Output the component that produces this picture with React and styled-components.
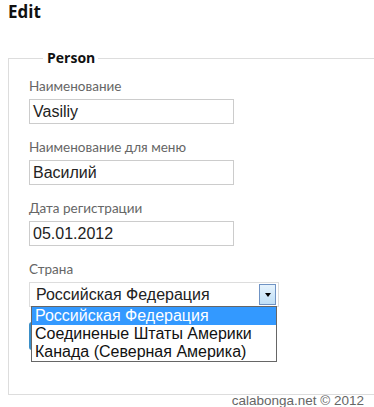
import React from 'react';
import styled, { createGlobalStyle } from 'styled-components';

const GlobalStyle = createGlobalStyle`
    html, body {
        margin: 0;
        padding: 0;
        background: #fff;
        overflow: hidden;
    }
`;

const Page = styled.div`
    width: 390px;
    height: 407px;
    padding-left: 8px;
    box-sizing: border-box;
    font-family: "Open Sans", "Liberation Sans", sans-serif;
`;

const Title = styled.h2`
    margin: 0;
    padding-top: 1px;
    font-size: 17px;
    line-height: 22px;
    font-weight: 700;
    color: #111;
`;

const PersonSet = styled.fieldset`
    position: relative;
    margin: 27px 0 0 0;
    padding: 12px 0 0 20px;
    height: 345px;
    box-sizing: border-box;
    border: 1px solid #ddd;
`;

const Legend = styled.legend`
    margin-left: 14px;
    padding: 0 3px 0 4px;
    font-size: 14px;
    font-weight: 700;
    line-height: 16px;
    color: #111;
`;

const Field = styled.div`
    display: flex;
    flex-direction: column;
    align-items: flex-start;
    margin-bottom: 15px;
    position: relative;
`;

const Label = styled.label`
    font-family: Lato, "Open Sans", sans-serif;
    font-size: 13.5px;
    line-height: 16px;
    color: #666;
    margin-bottom: 5px;
`;

const Input = styled.div`
    width: 205px;
    height: 25px;
    box-sizing: border-box;
    border: 1px solid #ccc;
    padding: 2px 3px 0;
    font-family: "Liberation Sans", Arial, sans-serif;
    font-size: 16px;
    line-height: 20px;
    color: #222;
`;

const Select = styled.div`
    width: 250px;
    height: 25px;
    box-sizing: border-box;
    border: 1px solid #ddd;
    padding: 1px 2px 0 6px;
    display: flex;
    align-items: center;
    justify-content: space-between;
    font-family: "Liberation Sans", Arial, sans-serif;
    font-size: 16px;
    color: #222;
`;

const DropButton = styled.span`
    width: 17px;
    height: 21px;
    box-sizing: border-box;
    border: 1px solid #6f93c4;
    background: linear-gradient(#e6f3fd, #bfdff7);
    display: flex;
    align-items: center;
    justify-content: center;
    margin-top: -1px;
`;

const Arrow = styled.span`
    width: 0;
    height: 0;
    border-left: 3px solid transparent;
    border-right: 3px solid transparent;
    border-top: 4px solid #000;
`;

const OptionList = styled.ul`
    position: absolute;
    left: 2px;
    top: 45px;
    width: 246px;
    margin: 0;
    padding: 0;
    list-style: none;
    box-sizing: border-box;
    border: 1px solid #666;
    background: #fff;
    z-index: 2;
    font-family: "Liberation Sans", Arial, sans-serif;
    font-size: 16px;
    line-height: 18px;
    color: #111;
`;

const Option = styled.li`
    padding-left: 3px;
    background: ${p => (p.selected ? '#3399ff' : 'transparent')};
    color: ${p => (p.selected ? '#fff' : '#111')};
`;

// save button sits behind the open list, only its left edge shows
const SaveButton = styled.button`
    margin-top: 15px;
    width: 80px;
    height: 28px;
    border: none;
    border-radius: 3px;
    background: #3a8fc8;
`;

const Footer = styled.div`
    text-align: right;
    padding-right: 26px;
    margin-top: 0;
    font-family: "Liberation Sans", Arial, sans-serif;
    font-size: 13.5px;
    line-height: 12px;
    color: #666;
`;

const countries = [
    'Российская Федерация',
    'Соединеные Штаты Америки',
    'Канада (Северная Америка)',
];

const App = () => {
    return (
        <Page>
            <GlobalStyle />
            <Title>Edit</Title>
            <PersonSet>
                <Legend>Person</Legend>
                <Field>
                    <Label>Наименование</Label>
                    <Input>Vasiliy</Input>
                </Field>
                <Field>
                    <Label>Наименование для меню</Label>
                    <Input>Василий</Input>
                </Field>
                <Field>
                    <Label>Дата регистрации</Label>
                    <Input>05.01.2012</Input>
                </Field>
                <Field>
                    <Label>Страна</Label>
                    <Select>
                        {countries[0]}
                        <DropButton><Arrow /></DropButton>
                    </Select>
                    <OptionList>
                        {countries.map((c, i) => (
                            <Option key={c} selected={i === 0}>{c}</Option>
                        ))}
                    </OptionList>
                    <SaveButton aria-label="Save" />
                </Field>
            </PersonSet>
            <Footer>calabonga.net © 2012</Footer>
        </Page>
    );
};

export default App;
